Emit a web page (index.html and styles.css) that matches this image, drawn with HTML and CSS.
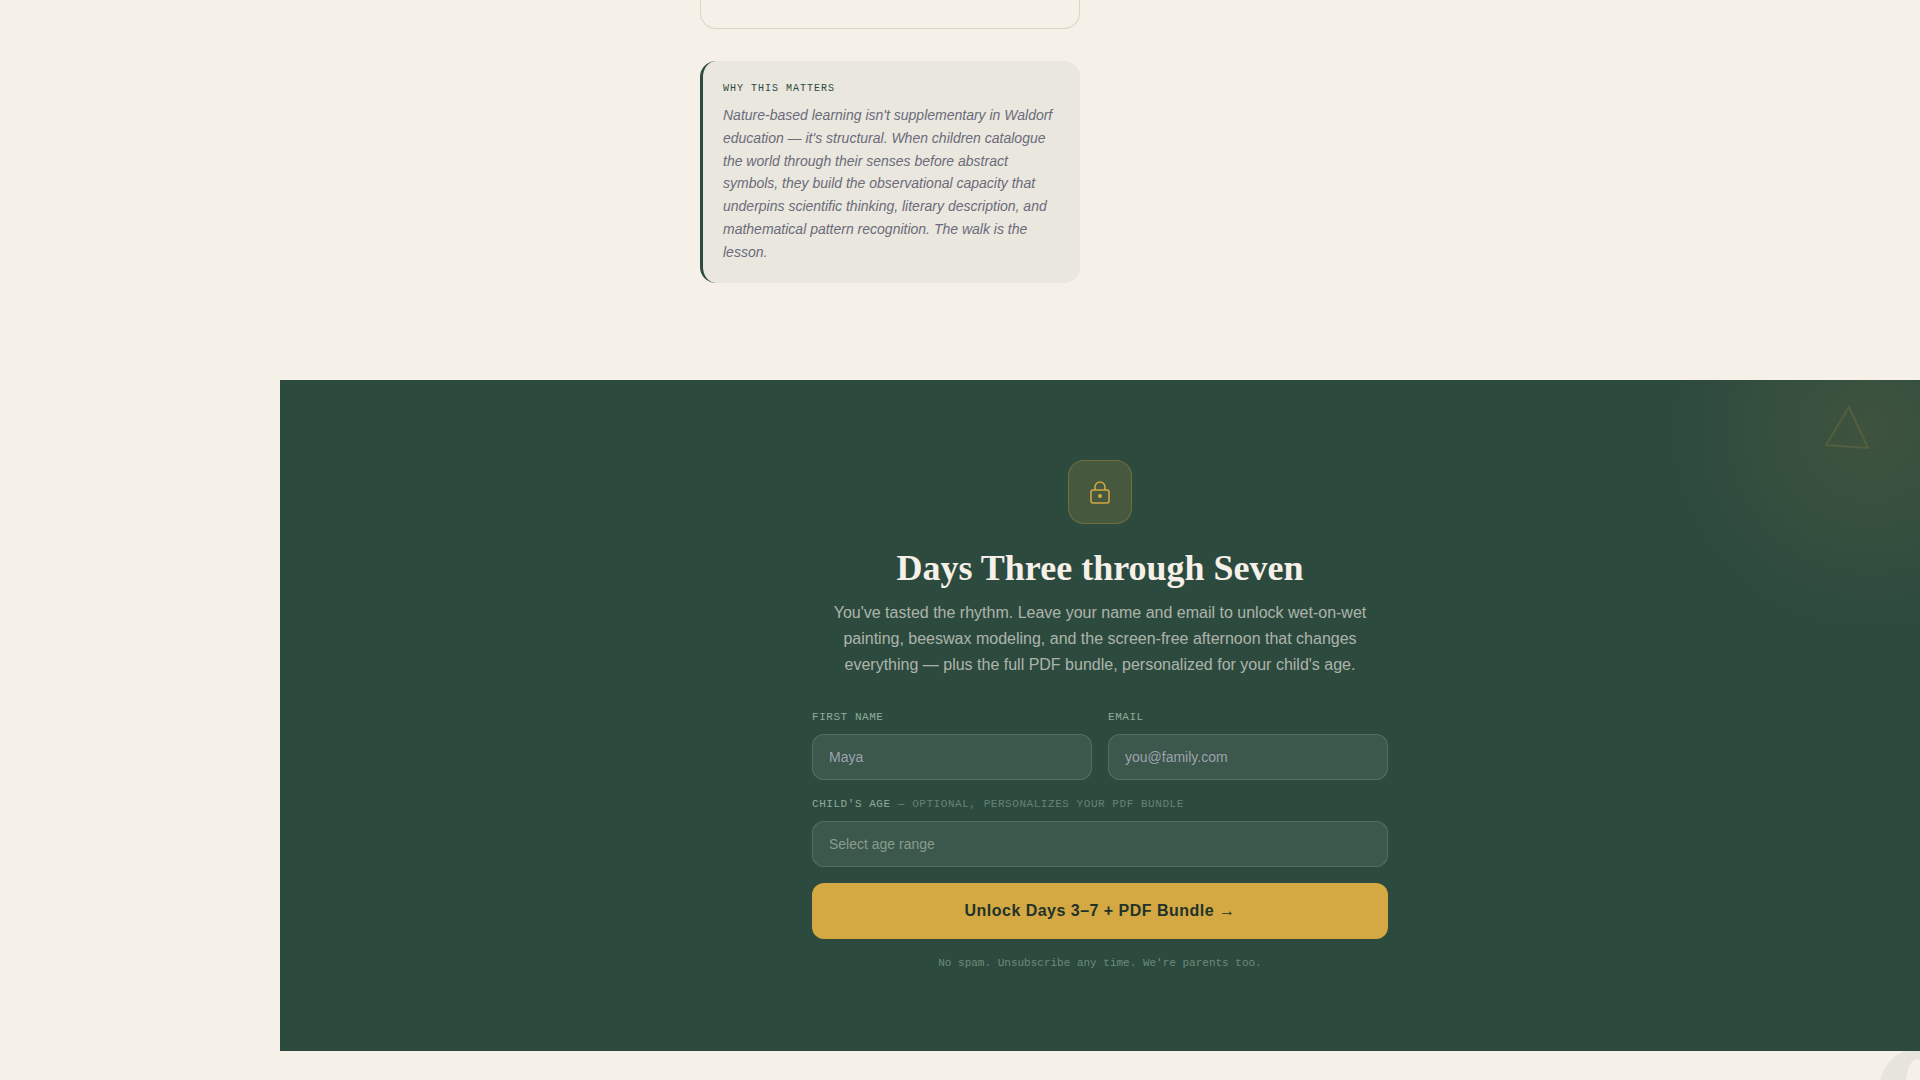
FILE: index.html
```
<!DOCTYPE html>
<html lang="en">
<head>
    <meta charset="UTF-8">
    <meta name="viewport" content="width=device-width, initial-scale=1.0">
    <title>Days Three through Seven</title>
    <link rel="stylesheet" href="styles.css">
</head>
<body>
    <main class="main">
        <section class="day">
            <div class="day-column">
                <div class="card"></div>
                <aside class="note">
                    <h3 class="note-label">Why this matters</h3>
                    <p class="note-text">Nature-based learning isn't supplementary in Waldorf education — it's structural. When children catalogue the world through their senses before abstract symbols, they build the observational capacity that underpins scientific thinking, literary description, and mathematical pattern recognition. The walk is the lesson.</p>
                </aside>
            </div>
        </section>

        <section class="unlock">
            <div class="glow"></div>
            <svg class="triangle" viewBox="0 0 48 48" fill="none" stroke="currentColor" stroke-width="2" aria-hidden="true">
                <path d="M25 3L2 41L44 44Z"/>
            </svg>
            <div class="unlock-inner">
                <div class="lock">
                    <svg width="28" height="28" viewBox="0 0 28 28" fill="none" stroke="currentColor" stroke-width="1.5" aria-hidden="true">
                        <rect x="5" y="12" width="18" height="13" rx="2"/>
                        <path d="M9 12V9a5 5 0 0 1 10 0v3"/>
                        <circle cx="14" cy="18" r="2" fill="currentColor" stroke="none"/>
                    </svg>
                </div>
                <h2 class="title">Days Three through Seven</h2>
                <p class="lead">You've tasted the rhythm. Leave your name and email to unlock wet-on-wet painting, beeswax modeling, and the screen-free afternoon that changes everything — plus the full PDF bundle, personalized for your child's age.</p>

                <form class="form">
                    <div class="form-row">
                        <div class="form-group">
                            <label for="name">First name</label>
                            <input type="text" id="name" class="form-control" placeholder="Maya" required>
                        </div>
                        <div class="form-group">
                            <label for="email">Email</label>
                            <input type="email" id="email" class="form-control" placeholder="you@family.com" required>
                        </div>
                    </div>
                    <div class="form-group">
                        <label for="age">Child's age <span class="optional">— optional, personalizes your PDF bundle</span></label>
                        <select id="age" class="form-control select">
                            <option value="">Select age range</option>
                        </select>
                    </div>
                    <button type="submit" class="submit">Unlock Days 3–7 + PDF Bundle →</button>
                </form>
                <p class="small-print">No spam. Unsubscribe any time. We're parents too.</p>
            </div>
        </section>

        <section class="next">
            <span class="numeral" aria-hidden="true">0</span>
        </section>
    </main>
</body>
</html>
```

FILE: styles.css
```
* {
    box-sizing: border-box;
    margin: 0;
    padding: 0;
}
body {
    font-family: "Liberation Sans", Arial, sans-serif;
    background: #f5f0e8;
    color: #2d4a3e;
    overflow: hidden;
}
.main {
    margin-left: 280px;
}
.day {
    display: grid;
    grid-template-columns: 1fr 1fr;
    gap: 40px;
    max-width: 800px;
    margin: 0 auto;
    padding-bottom: 97px;
}
.day-column {
    display: flex;
    flex-direction: column;
    gap: 32px;
}
.card {
    padding-top: 28px;
    border: 1px solid #dcd5c6;
    border-top: none;
    border-radius: 0 0 16px 16px;
}
.note {
    padding: 20px;
    background: #e9e7de;
    border-left: 3px solid #2d4a3e;
    border-radius: 16px;
}
.note-label {
    margin-bottom: 8px;
    font-family: "Liberation Mono", "Courier New", monospace;
    font-size: 10px;
    font-weight: 400;
    line-height: 15px;
    letter-spacing: 1px;
    text-transform: uppercase;
}
.note-text {
    font-size: 14px;
    font-style: italic;
    line-height: 1.625;
    color: #6b6b7b;
}
.unlock {
    position: relative;
    overflow: hidden;
    padding: 80px 32px;
    background: #2d4a3e;
    text-align: center;
}
.glow {
    position: absolute;
    top: -150px;
    right: -150px;
    width: 400px;
    height: 400px;
    background: radial-gradient(circle, rgba(212, 168, 67, 0.1), transparent 70%);
}
.triangle {
    position: absolute;
    top: 24px;
    right: 48px;
    width: 48px;
    height: 48px;
    color: #d4a843;
    opacity: 0.15;
}
.unlock-inner {
    position: relative;
    max-width: 576px;
    margin: 0 auto;
}
.lock {
    display: flex;
    align-items: center;
    justify-content: center;
    width: 64px;
    height: 64px;
    margin: 0 auto 24px;
    color: #d4a843;
    background: rgba(212, 168, 67, 0.15);
    border: 1px solid rgba(212, 168, 67, 0.3);
    border-radius: 16px;
}
.title {
    margin-bottom: 12px;
    font-family: "Liberation Serif", "Times New Roman", serif;
    font-size: 36px;
    line-height: 40px;
    color: #f5f0e8;
}
.lead {
    margin-bottom: 31px;
    font-size: 16px;
    line-height: 26px;
    color: rgba(245, 240, 232, 0.65);
}
.form {
    display: flex;
    flex-direction: column;
    gap: 16px;
    text-align: left;
}
.form-row {
    display: grid;
    grid-template-columns: 1fr 1fr;
    gap: 16px;
}
.form-group {
    display: flex;
    flex-direction: column;
    gap: 8px;
}
.form-group label {
    font-family: "Liberation Mono", "Courier New", monospace;
    font-size: 11px;
    line-height: 17px;
    letter-spacing: 0.05em;
    text-transform: uppercase;
    color: #8fac9b;
}
.form-group .optional {
    color: #648373;
}
.form-control {
    width: 100%;
    height: 46px;
    padding: 0 16px;
    font-family: inherit;
    font-size: 14px;
    color: #f5f0e8;
    background: rgba(245, 240, 232, 0.08);
    border: 1px solid rgba(143, 172, 155, 0.3);
    border-radius: 12px;
    outline: none;
}
.form-control::placeholder {
    color: #9ca3af;
}
.form-control:focus {
    border-color: #d4a843;
}
.select {
    appearance: none;
    color: #869d8e;
}
.submit {
    height: 56px;
    font-family: inherit;
    font-size: 16px;
    font-weight: 700;
    letter-spacing: 0.03em;
    color: #1f3329;
    background: #d4a843;
    border: none;
    border-radius: 12px;
    cursor: pointer;
}
.small-print {
    margin-top: 16px;
    font-family: "Liberation Mono", "Courier New", monospace;
    font-size: 11px;
    line-height: 16px;
    color: #6b8a7a;
}
.next {
    position: relative;
    height: 320px;
    overflow: hidden;
}
/* oversized day number behind the next section */
.numeral {
    position: absolute;
    top: -36px;
    right: -48px;
    font-family: "Liberation Serif", "Times New Roman", serif;
    font-size: 200px;
    font-weight: 700;
    line-height: 200px;
    color: rgba(45, 74, 62, 0.07);
}
```
